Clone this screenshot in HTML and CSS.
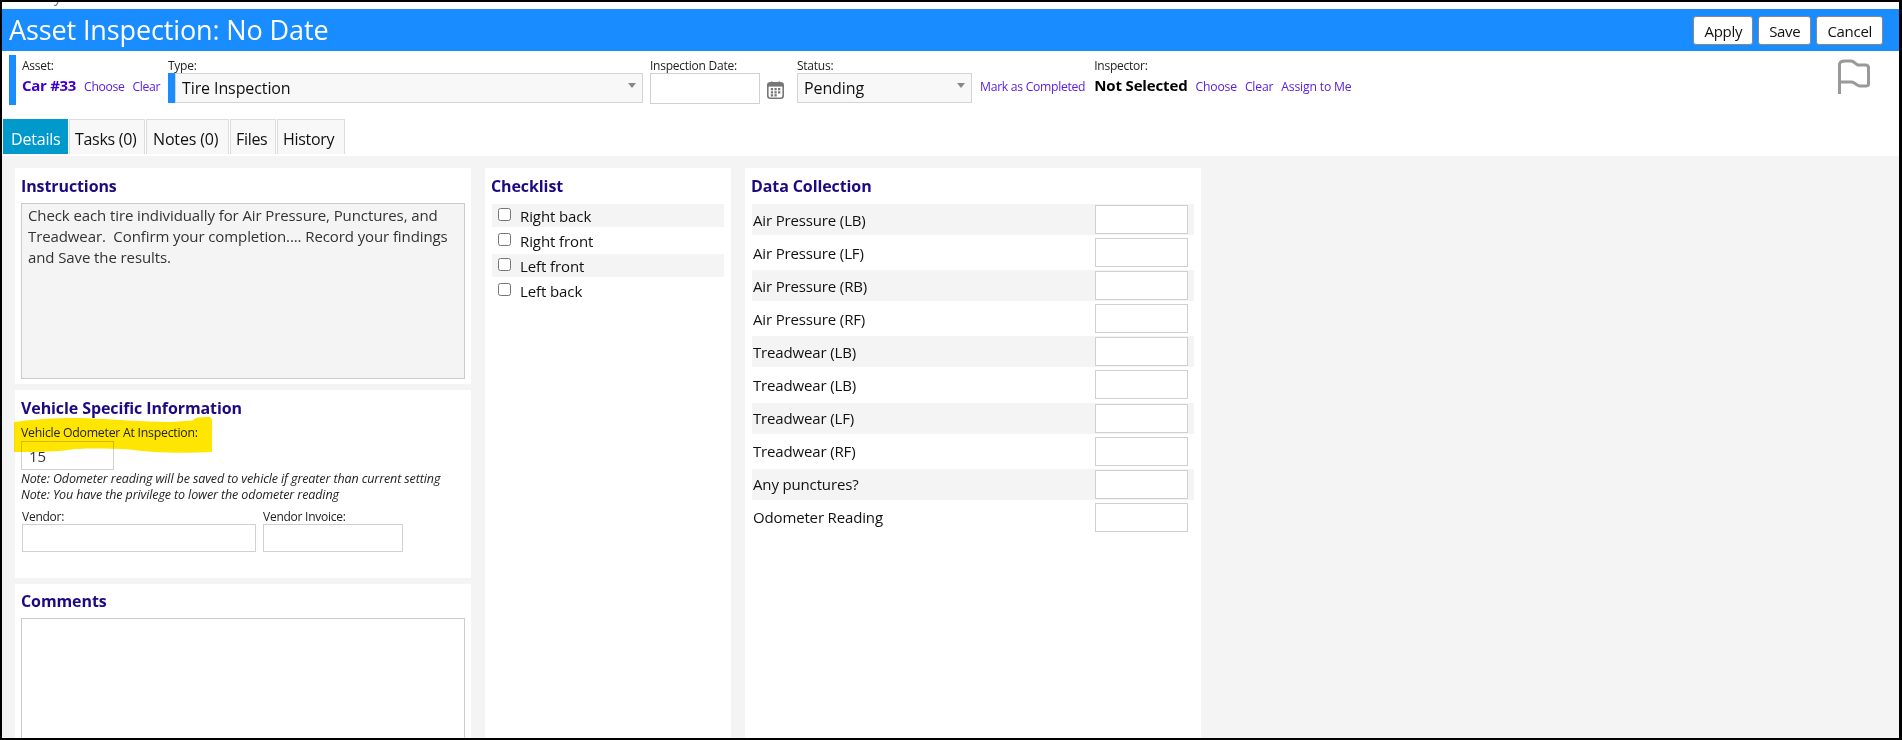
FILE: index.html
```html
<!DOCTYPE html>
<html lang="en">
<head>
<meta charset="utf-8">
<title>Asset Inspection</title>
<link rel="stylesheet" href="styles.css">
</head>
<body>
<div class="frame">
  <div class="clipped"><span class="clipped-text">Facility and User</span></div>
  <header class="titlebar">
    <h1 class="title">Asset Inspection: No Date</h1>
    <div class="actions">
      <button class="btn">Apply</button>
      <button class="btn">Save</button>
      <button class="btn">Cancel</button>
    </div>
  </header>
  <section class="fields">
    <div class="req-bar"></div>
    <div class="field asset">
      <label class="lbl">Asset:</label>
      <div class="pick"><strong class="car">Car #33</strong><a class="lnk">Choose</a><a class="lnk">Clear</a></div>
    </div>
    <div class="field type">
      <label class="lbl">Type:</label>
      <div class="select-wrap type-select"><select class="sel"><option>Tire Inspection</option></select></div>
    </div>
    <div class="field date">
      <label class="lbl">Inspection Date:</label>
      <div class="date-row">
        <input class="inp date-input" type="text">
        <svg class="cal" viewBox="0 0 17 18" width="17" height="18"><rect x="0.8" y="1.8" width="15.4" height="15.4" rx="2.5" fill="#fff" stroke="#777" stroke-width="1.6"/><rect x="1" y="2" width="15" height="3.6" fill="#777"/><rect x="4" y="0.5" width="1.6" height="3" fill="#777"/><rect x="11.4" y="0.5" width="1.6" height="3" fill="#777"/><g fill="#777"><rect x="3.8" y="7" width="2.3" height="2.3"/><rect x="7.4" y="7" width="2.3" height="2.3"/><rect x="11" y="7" width="2.3" height="2.3"/><rect x="3.8" y="10.2" width="2.3" height="2.3"/><rect x="7.4" y="10.2" width="2.3" height="2.3"/><rect x="11" y="10.2" width="2.3" height="2.3"/><rect x="3.8" y="13.2" width="2.3" height="2.3"/><rect x="7.4" y="13.2" width="2.3" height="2.3"/></g></svg>
      </div>
    </div>
    <div class="field status">
      <label class="lbl">Status:</label>
      <div class="select-wrap status-select"><select class="sel"><option>Pending</option></select></div>
    </div>
    <a class="lnk mark">Mark as Completed</a>
    <div class="field inspector">
      <label class="lbl">Inspector:</label>
      <div class="pick"><strong class="who">Not Selected</strong><a class="lnk">Choose</a><a class="lnk">Clear</a><a class="lnk">Assign to Me</a></div>
    </div>
    <svg class="flag" viewBox="0 0 36 36" width="36" height="36"><path d="M2.500 35V5C3 3 5 2 8 2H14C17 2 18 5 21 6H28.500C30.500 6 31.500 7 31.500 9V25C31.500 26 30.500 27 28.500 27H23C20 27 19 24 15 23H2.500" fill="none" stroke="#999" stroke-width="3" stroke-linejoin="round"/></svg>
  </section>
  <nav class="tabs">
    <a class="tab active">Details</a>
    <a class="tab">Tasks (0)</a>
    <a class="tab">Notes (0)</a>
    <a class="tab">Files</a>
    <a class="tab">History</a>
  </nav>
  <main class="content">
    <div class="col left">
      <section class="card instructions">
        <h2 class="head">Instructions</h2>
        <div class="readonly">Check each tire individually for Air Pressure, Punctures, and Treadwear.&nbsp; Confirm your completion.... Record your findings and Save the results.</div>
      </section>
      <section class="card vehicle">
        <h2 class="head">Vehicle Specific Information</h2>
        <label class="lbl odo-lbl">Vehicle Odometer At Inspection:</label>
        <input class="inp odo" type="text" value="15">
        <p class="note">Note: Odometer reading will be saved to vehicle if greater than current setting</p>
        <p class="note">Note: You have the privilege to lower the odometer reading</p>
        <div class="vendor-row">
          <div class="vendor"><label class="lbl">Vendor:</label><input class="inp vendor-inp" type="text"></div>
          <div class="invoice"><label class="lbl">Vendor Invoice:</label><input class="inp invoice-inp" type="text"></div>
        </div>
        <svg class="marker" viewBox="0 0 200 37" width="200" height="37" preserveAspectRatio="none"><path d="M1 5C20 2 50 .5 67 1C100 2 130 5 157 5L180 3.500C181 1 184 0 197 0L199 2V35C170 36.500 140 36 117 32.500C90 31 65 31 55 33C40 35 15 35 1 35Z" fill="#ffe600"/></svg>
      </section>
      <section class="card comments">
        <h2 class="head">Comments</h2>
        <textarea class="area"></textarea>
      </section>
    </div>
    <section class="card checklist">
      <h2 class="head">Checklist</h2>
      <label class="check"><input type="checkbox" class="cb"><span>Right back</span></label>
      <label class="check"><input type="checkbox" class="cb"><span>Right front</span></label>
      <label class="check"><input type="checkbox" class="cb"><span>Left front</span></label>
      <label class="check"><input type="checkbox" class="cb"><span>Left back</span></label>
    </section>
    <section class="card data">
      <h2 class="head">Data Collection</h2>
      <div class="row"><span>Air Pressure (LB)</span><input class="inp data-inp" type="text"></div>
      <div class="row"><span>Air Pressure (LF)</span><input class="inp data-inp" type="text"></div>
      <div class="row"><span>Air Pressure (RB)</span><input class="inp data-inp" type="text"></div>
      <div class="row"><span>Air Pressure (RF)</span><input class="inp data-inp" type="text"></div>
      <div class="row"><span>Treadwear (LB)</span><input class="inp data-inp" type="text"></div>
      <div class="row"><span>Treadwear (LB)</span><input class="inp data-inp" type="text"></div>
      <div class="row"><span>Treadwear (LF)</span><input class="inp data-inp" type="text"></div>
      <div class="row"><span>Treadwear (RF)</span><input class="inp data-inp" type="text"></div>
      <div class="row"><span>Any punctures?</span><input class="inp data-inp" type="text"></div>
      <div class="row"><span>Odometer Reading</span><input class="inp data-inp" type="text"></div>
    </section>
  </main>
</div>
</body>
</html>
```
FILE: styles.css
```css
* { box-sizing: border-box; }
html, body { margin: 0; height: 740px; overflow: hidden; background: #000; }
body { font-family: "Open Sans", "Noto Sans", sans-serif; color: #111; }
.frame { margin: 2px 3px 2px 2px; height: 736px; background: #fff; display: flex; flex-direction: column; overflow: hidden; }
.clipped { height: 7px; line-height: 0; padding-left: 9px; overflow: hidden; flex: none; }
.clipped-text { display: block; margin-top: -6px; font-size: 16px; color: #777; }

.titlebar { flex: none; height: 42px; background: #198cff; display: flex; align-items: center; justify-content: space-between; padding: 0 16px 0 7px; }
.title { margin: 0; font-size: 27px; font-weight: 400; color: #fff; letter-spacing: -0.12px; line-height: 42px; }
.actions { display: flex; gap: 5px; margin-top: 1px; }
.btn { height: 29px; padding: 0 10px; font: 15px "Open Sans", sans-serif; letter-spacing: -0.3px; background: #fff; color: #111; border: 1px solid #888; border-radius: 3px; }

.fields { flex: none; height: 68px; display: flex; align-items: flex-start; padding: 4px 0 0 7px; position: relative; }
.req-bar { width: 7px; height: 50px; background: #198cff; margin-right: 6px; flex: none; }
.field { flex: none; }
.lbl { display: block; font-size: 12px; line-height: 14px; letter-spacing: -0.25px; color: #222; }
.asset { width: 146px; padding-top: 4px; }
.pick { display: flex; align-items: baseline; gap: 8px; height: 24px; line-height: 24px; }
.car { font-size: 15px; color: #3a00d0; letter-spacing: -0.3px; }
.lnk { font-size: 12.200px; color: #5a1ee6; letter-spacing: -0.35px; }
.who { font-size: 15px; color: #000; letter-spacing: -0.15px; }
.inspector .lnk { letter-spacing: -0.18px; }
.type { width: 482px; padding-top: 4px; }
.select-wrap { position: relative; height: 30px; }
.select-wrap::after { content: ""; position: absolute; right: 7px; top: 10px; border-left: 4px solid transparent; border-right: 4px solid transparent; border-top: 5px solid #888; }
.sel { appearance: none; width: 100%; height: 30px; padding: 0 0 0 6px; font: 16px "Open Sans", sans-serif; letter-spacing: -0.1px; color: #111; background: #f8f8f8; border: 1px solid #d4d4d4; border-radius: 0; }
.type-select { width: 475px; border-left: 7px solid #198cff; }
.date { width: 147px; padding-top: 4px; }
.date-row { display: flex; align-items: center; gap: 7px; }
.inp { border: 1px solid #d0d0d0; background: #fff; border-radius: 0; padding: 0 7px; font: 15px "Open Sans", sans-serif; color: #333; outline: none; }
.date-input { width: 110px; height: 31px; }
.cal { flex: none; margin-top: 2px; }
.status { width: 175px; padding-top: 4px; }
.status-select { width: 175px; }
.mark { flex: none; margin: 25px 9px 0 8px; line-height: 14px; letter-spacing: -0.3px; }
.inspector { padding-top: 4px; }
.flag { position: absolute; left: 1835px; top: 8px; }

.tabs { flex: none; height: 37px; display: flex; padding: 0 0 2px 1px; gap: 1px; }
.tab { display: block; height: 35px; padding: 0 5px; line-height: 39px; font-size: 16px; letter-spacing: -0.3px; background: #f8f8f8; border: 1px solid #ddd; border-bottom: 0; color: #111; white-space: nowrap; overflow: hidden; }
.tab.active { background: #0099cc; border-color: #0099cc; color: #fff; padding-left: 7px; }
.tab:nth-child(1) { width: 65px; letter-spacing: -0.2px; }
.tab:nth-child(2) { width: 76px; }
.tab:nth-child(3) { width: 83px; padding-left: 6px; letter-spacing: -0.15px; }
.tab:nth-child(4) { width: 46px; }
.tab:nth-child(5) { width: 68px; }

.content { flex: 1 1 auto; min-height: 0; background: #f4f4f4; padding: 12px 0 0 13px; display: flex; gap: 14px; overflow: hidden; }
.col { display: flex; flex-direction: column; gap: 6px; width: 456px; flex: none; }
.card { background: #fff; padding: 0 6px; flex: none; }
.head { margin: 0; height: 35px; line-height: 37px; font-size: 16px; font-weight: 700; color: #1c0a80; letter-spacing: -0.1px; }
.instructions { height: 216px; }
.readonly { height: 176px; background: #f4f4f4; border: 1px solid #ccc; padding: 1px 6px; font-size: 15px; line-height: 21px; letter-spacing: -0.1px; color: #333; }
.vehicle { height: 188px; position: relative; padding-top: 1px; }
.vehicle .head { height: 33px; line-height: 34px; }
.odo-lbl { position: relative; z-index: 1; height: 17px; line-height: 14px; padding-top: 2px; font-size: 12.300px; letter-spacing: -0.25px; }
.odo { display: block; width: 93px; height: 29px; padding-top: 1px; }
.note { margin: 0; font-size: 12.500px; line-height: 16px; font-style: italic; letter-spacing: -0.11px; color: #222; }
.note:first-of-type { margin-top: 1px; }
.vendor-row { display: flex; gap: 7px; padding-left: 1px; margin-top: 7px; }
.vendor-inp { display: block; width: 234px; height: 28px; }
.invoice-inp { display: block; width: 140px; height: 28px; }
.marker { position: absolute; left: -2px; top: 27px; mix-blend-mode: multiply; pointer-events: none; }
.comments { flex: 1 1 auto; height: 300px; }
.comments .head { height: 34px; line-height: 35px; }
.area { display: block; width: 444px; height: 240px; border: 1px solid #ccc; background: #fff; resize: none; outline: none; }

.checklist { width: 246px; display: block; }
.checklist .head { height: 36px; }
.check { display: flex; align-items: center; height: 23px; margin: 0 1px 2px 1px; padding-left: 6px; font-size: 15px; letter-spacing: -0.1px; }
.check:nth-of-type(odd) { background: #f4f4f4; }
.cb { appearance: none; width: 13px; height: 13px; margin: 0 9px 3px 0; border: 1px solid #767676; border-radius: 2.500px; background: #fff; flex: none; }

.data { width: 456px; padding: 0 7px; }
.data .head { height: 36px; margin-left: -1px; }
.row { display: flex; justify-content: space-between; align-items: center; height: 31px; margin-bottom: 2.100px; padding: 0 6px 0 1px; font-size: 15px; letter-spacing: -0.15px; }
.row:nth-of-type(odd) { background: #f4f4f4; }
.data-inp { width: 93px; height: 29px; }
```
